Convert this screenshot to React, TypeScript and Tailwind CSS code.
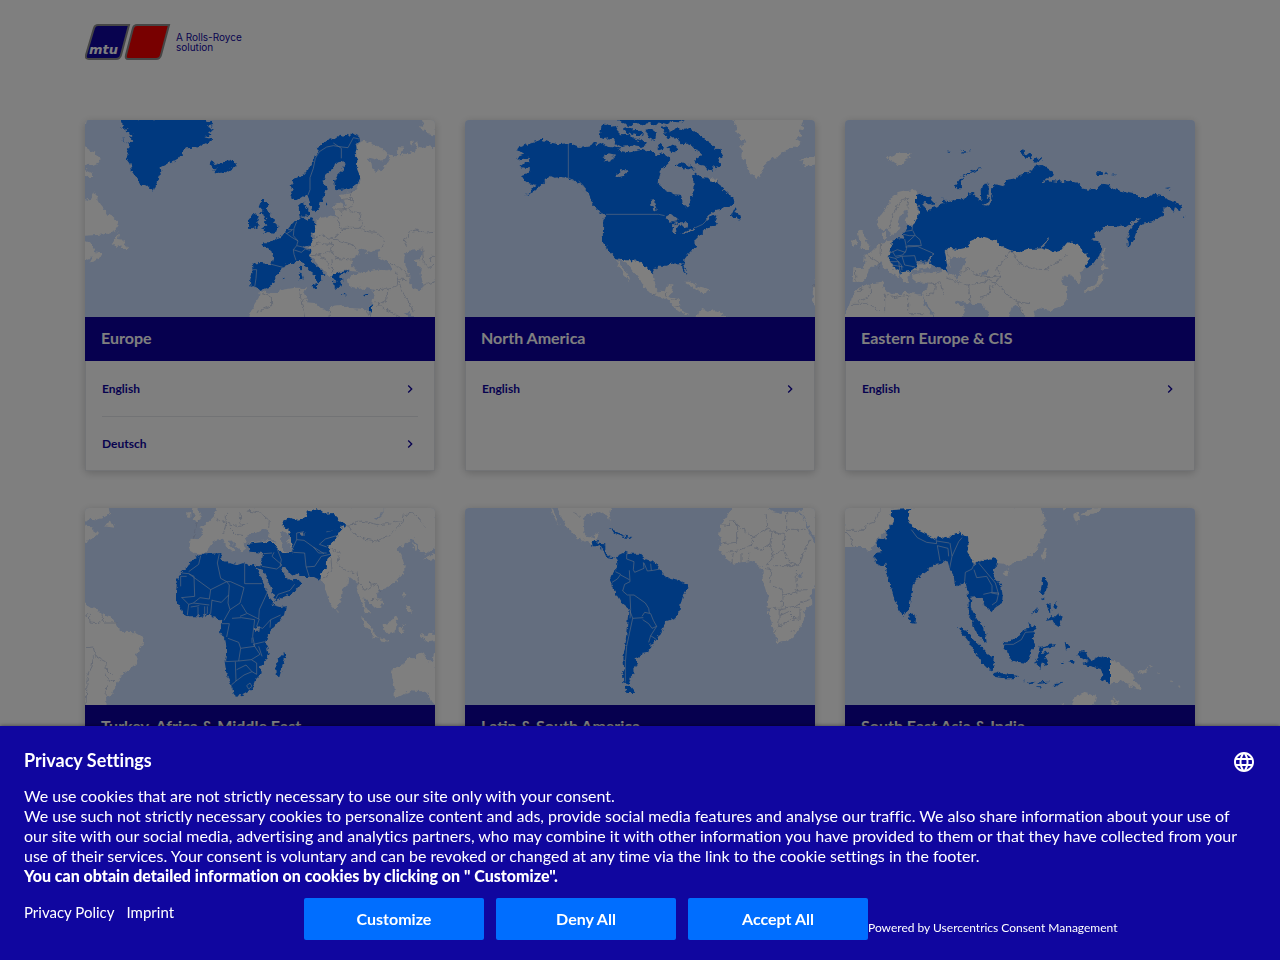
import React from "react";
import { MdChevronRight, MdLanguage } from "react-icons/md";

type MapShapes = {
  land: string;
  active: string;
  water?: string;
  borders: string;
  activeBorders: string;
};

type Region = {
  name: string;
  languages: string[];
  map: MapShapes;
};

const europe: MapShapes = {
  land: `M838 82 L850 78 872 84 905 100 923 118 915 132 892 135 866 128 858 132 874 142 877 160 886 170 897 165 905 170 912 152 925 145 930 128 924 118 945 124 962 122 975 116 984 118 1008 104 1004 88 1012 82 1016 96 1034 98 1042 92 1070 98 V612 H872 L876 580 878 555 883 525 862 520 848 525 835 516 820 522 808 512 803 492 822 478 850 472 812 468 803 466 780 470 762 480 756 490 742 478 725 460 708 442 694 428 690 410 688 390 700 370 706 330 716 310 745 304 772 308 764 292 762 270 780 262 790 276 800 272 796 256 779 252 780 240 815 234 828 226 842 194 832 160 828 100Z
    M10 10 H22 L18 28 10 30Z M10 92 L30 106 48 116 62 132 54 146 40 152 28 146 10 152Z M10 160 L34 172 40 186 26 186 10 180Z
    M10 262 L30 250 42 228 52 250 62 268 72 280 80 296 95 304 108 316 116 330 106 346 84 356 50 360 10 362Z M10 372 L34 388 46 412 72 418 58 428 40 440 30 442 40 424 20 434 10 432Z
    M92 390 L104 376 112 358 118 350 114 372 130 374 136 388 142 402 130 402 120 394 110 396 104 388Z
    M1020 10 H1070 V62 L1046 58 1036 46 1018 40 1030 30Z M950 106 L958 96 972 98 966 112 956 124Z M990 84 L996 78 1000 88 994 94Z
    M498 612 L514 590 524 566 536 548 540 528 572 534 610 524 650 518 678 520 672 536 682 550 678 562 704 564 720 580 748 590 756 572 786 570 810 582 846 584 866 588 870 612Z`,
  active: `M122 10 L130 34 124 42 146 40 136 48 158 60 150 66 160 78 144 86 128 76 132 68 124 68 150 92 138 104 146 120 140 130 152 146 156 170 170 188 182 208 204 214 220 230 228 210 236 186 244 172 242 156 262 146 270 134 274 142 296 130 304 118 318 100 346 98 388 80 398 72 372 66 398 62 384 52 402 44 380 34 400 30 390 18 380 22 374 10Z
    M388 146 L394 136 402 142 406 150 426 142 440 140 454 134 466 144 470 154 452 162 438 172 416 174 400 170 410 160 398 160Z
    M636 252 L630 232 642 226 632 214 640 196 656 184 672 178 684 164 694 146 704 126 716 110 710 98 724 88 736 84 750 70 764 72 778 62 792 68 800 56 808 64 820 56 836 62 840 74 826 84 830 100 824 120 832 136 830 160 842 188 830 206 812 218 786 224 766 222 762 196 770 180 788 164 794 146 784 140 770 144 756 166 740 178 730 196 740 222 734 240 724 254 718 280 704 292 696 282 690 262 684 248 680 236 662 248 648 256Z
    M658 302 L656 276 672 262 676 276 686 284 678 296 672 308Z M680 292 L690 288 690 302 680 302Z
    M540 296 L548 288 536 276 544 256 556 252 554 264 570 264 560 282 566 294 580 310 582 322 598 334 594 346 578 356 560 354 546 360 558 344 546 340 560 330 554 320 562 314 552 306 550 298Z
    M504 338 L504 318 516 302 528 298 536 304 532 318 534 334 520 340Z
    M550 382 L576 382 590 370 600 366 608 358 618 352 624 342 636 326 650 318 660 312 664 306 678 314 694 310 706 316 704 334 708 352 692 362 698 380 686 392 668 398 690 404 692 418 688 424 700 444 718 460 736 480 722 480 724 496 716 508 708 496 708 482 690 470 674 452 664 438 650 438 642 446 626 448 612 454 600 470 588 482 582 496 568 516 556 520 540 526 528 516 512 518 510 500 518 466 516 446 540 444 574 448 580 428 574 408 562 398 548 390Z
    M694 510 L712 506 710 518 700 516Z M656 478 L664 472 668 490 660 496Z M660 454 L666 452 666 466 660 464Z
    M754 484 L766 476 784 472 804 468 800 474 782 478 780 486 788 496 780 498 786 512 774 516 770 522 764 512 758 500 774 500 764 494Z M784 536 L796 538 796 541 784 540Z M850 540 L866 536 862 543 852 544Z M870 574 L876 564 876 594 870 586Z M738 262 L742 268 738 272Z M608 490 L614 488 612 493Z`,
  water: `M815 450 L820 430 834 420 840 402 852 406 866 414 884 404 900 402 890 416 900 430 928 444 936 462 920 466 896 464 870 468 850 472 830 468Z
    M974 420 L990 404 1018 402 1028 412 1020 432 1004 436 1010 452 1026 456 1022 480 1032 510 1022 526 1000 520 988 506 988 480 982 460 972 440Z M972 592 L990 590 1004 612 990 612Z`,
  borders: `M778 255 L812 250 820 262 806 286 785 282 760 282 M812 250 812 228 M806 286 840 294 838 310 850 328 838 340 790 340 780 350 M773 308 785 345 772 362 750 370 M786 284 784 310 M838 338 864 350 890 352 914 376 906 396 M702 370 725 358 745 372 770 374 790 380 820 390 828 402 M700 394 716 384 745 388 760 384 752 404 770 430 800 434 824 436 M694 418 714 420 740 412 752 410 M714 420 740 436 748 462 M756 430 758 470 M980 395 970 375 984 366 988 350 1010 345 1040 354 1065 352 M1012 404 1028 402 1030 440 1050 460 1062 450 1052 440 1052 424 1065 424 M930 445 952 456 975 468 988 484 M946 470 956 492 980 494 M955 494 950 516 926 522 888 524 M956 496 966 530 980 552 1000 590 M924 522 920 556 888 574 M886 560 910 580 960 606 M1032 510 1065 500 M546 536 574 546 575 572 530 590 M658 520 664 560 674 606 M664 560 680 550 M752 590 750 606 M858 588 870 606`,
  activeBorders: `M838 72 L820 68 804 98 786 96 760 92 740 96 718 110 706 130 700 160 690 188 690 224 684 240 M760 84 784 100 784 130 M650 320 642 340 640 362 654 378 650 392 640 404 642 418 648 436 M612 350 634 366 654 378 M636 346 620 356 M650 392 668 396 690 394 M640 404 664 412 676 402 690 406 M518 464 530 464 528 490 524 516 M574 448 612 458 M624 344 640 344`,
};

const northAmerica: MapShapes = {
  land: `M816 10 L832 42 822 46 846 60 836 68 856 78 850 90 842 96 846 110 844 126 856 138 858 156 874 178 890 192 902 184 908 160 916 148 938 128 956 126 982 102 1012 92 1024 82 1006 70 1028 62 1014 50 1030 38 1024 22 1034 10Z
    M1020 134 L1042 130 1070 126 V148 L1040 154 1024 146 1032 140Z
    M466 430 L478 442 492 464 508 486 510 498 500 490 488 470 474 448Z M474 430 L510 436 528 434 548 448 558 452 566 466 578 476 582 502 588 520 598 532 618 528 622 512 640 510 636 530 628 542 642 550 656 552 658 576 668 590 690 598 676 600 654 588 640 574 626 558 604 546 582 540 560 526 546 508 536 488 516 466 502 448Z
    M672 500 L688 500 708 512 724 520 748 526 740 532 722 530 700 516Z M708 612 L714 592 728 582 742 590 764 586 780 592 800 612Z M1070 494 V580 L1056 560 1060 520Z M748 188 L768 192 776 210 756 206Z`,
  active: `M168 102 L192 92 216 82 246 74 268 82 296 88 326 84 360 96 394 90 404 78 410 92 428 84 440 92 474 96 480 108 510 112 546 104 560 110 580 108 584 124 606 112 620 120 634 132 626 144 618 152 604 166 598 186 596 208 612 222 642 238 664 240 668 266 682 278 692 270 690 244 702 230 704 206 696 190 704 172 724 186 744 188 758 204 770 196 784 218 800 234 816 248 824 266 800 278 770 284 746 300 736 318 756 304 772 300 764 318 774 330 756 334 738 344 718 362 706 374 708 396 690 410 674 432 670 450 680 480 668 462 664 444 636 446 620 452 594 452 580 470 578 478 560 458 546 450 528 436 498 436 466 428 442 406 428 380 430 312 440 302 420 292 404 276 394 258 388 236 376 222 360 206 340 196 320 188 300 186 284 188 270 182 256 198 240 214 222 230 196 242 214 228 228 210 204 204 190 194 186 180 206 174 210 160 178 156 190 146 208 140 206 128 172 134 178 124 194 118 178 106Z
    M420 60 L424 36 440 24 456 32 468 30 474 48 484 58 506 56 520 70 544 76 560 88 540 96 508 92 484 96 464 86 468 74 446 70 430 72 418 66Z
    M468 10 H682 L660 22 634 20 622 28 600 22 588 34 566 24 540 30 520 22 508 34 486 24Z
    M486 44 L506 38 520 46 538 44 552 60 540 64 516 56 500 52Z M556 44 L582 40 588 60 584 78 568 70Z M592 88 L606 84 612 100 598 106Z
    M604 38 L622 34 630 50 650 40 672 44 690 40 706 54 720 56 728 72 752 80 760 96 778 104 788 124 776 132 784 152 768 160 756 150 762 170 744 166 734 152 720 150 704 140 712 128 724 116 708 106 694 92 680 86 662 88 656 70 640 66 626 72 614 54Z
    M622 98 L640 88 656 104 646 112 632 110Z M644 152 L664 142 686 150 704 164 676 162 660 156Z
    M812 302 L824 276 828 294 838 300 842 314 828 308 818 310Z`,
  water: `M424 128 L446 118 466 122 462 132 442 142 430 138 438 130Z M468 184 L484 166 508 166 492 182 478 186Z M572 254 L580 252 586 270 590 288 580 284 574 268Z M612 308 L630 298 652 304 652 316 630 320Z M636 356 L640 328 656 322 680 322 684 336 672 340 660 328 650 340 648 356Z M664 356 L686 344 706 338 700 346 680 356Z`,
  borders: `M580 542 L594 532 M618 548 620 532 M632 556 654 552 M1058 512 H1065 M642 572 658 576`,
  activeBorders: `M325 86 V188 L350 204 366 226 388 244 M438 298 H596 L614 302 M640 318 L654 322 M706 338 L728 328 740 316 746 300 M356 198 L372 214 368 220 M404 276 L430 300`,
};

const easternEurope: MapShapes = {
  land: `M140 122 L156 126 168 114 186 116 212 118 208 126 192 130 200 138 176 154 168 144 152 138Z
    M114 336 L110 316 126 296 142 274 156 248 174 234 200 228 226 224 234 240 230 266 238 298 226 322 204 330 194 316 206 296 200 282 184 300 176 318 178 336 164 358 150 364 146 340 130 344 120 340Z
    M130 374 L128 350 138 344 138 364Z M54 350 L66 342 70 358 78 374 88 392 84 402 62 402 66 390 58 376Z M34 378 L48 372 52 386 36 392Z
    M74 424 L92 412 108 396 122 384 156 376 160 404 146 428 162 448 186 468 176 490 156 476 136 462 124 442 104 454 86 462 80 486 62 504 38 500 40 460 72 458Z
    M180 470 L210 466 232 450 280 440 270 458 220 466 202 486 206 500 192 502 184 488Z
    M216 480 L250 472 286 474 310 466 326 480 344 478 352 500 360 480 340 460 318 442 314 410 326 398 360 402 388 396 386 380 410 370 430 366 468 376 484 394 512 406 540 412 566 402 604 400 640 410 664 404 680 384 708 384 722 402 744 424 748 446 732 462 716 474 724 500 718 514 704 490 690 478 668 484 664 502 682 520 680 554 658 580 630 588 600 580 580 590 588 612 H560 L540 580 520 570 500 612 H452 L438 580 426 568 390 566 366 560 340 556 330 544 350 566 376 576 364 612 H288 L270 580 254 554 246 536 262 522 264 504 230 502 218 492Z
    M10 612 L30 560 54 520 84 506 126 500 134 524 160 536 184 538 194 530 246 540 254 570 284 612Z
    M732 530 L748 516 768 510 778 480 788 476 786 500 770 518 744 530Z M780 458 L790 448 806 458 788 468Z M788 404 L794 400 792 440 786 440Z`,
  active: `M228 240 L240 236 270 246 286 262 280 270 262 266 246 262 252 276 262 290 276 280 296 272 310 266 308 250 320 262 344 256 380 250 384 236 398 234 410 246 424 256 422 226 434 206 446 206 446 236 440 250 454 244 458 214 468 208 490 214 498 198 520 194 540 180 580 166 584 152 604 150 642 170 638 182 614 194 606 206 626 196 650 200 684 198 712 206 724 220 744 224 776 218 788 206 806 210 828 224 860 230 880 234 892 246 930 246 940 236 968 240 984 254 1006 262 1026 270 1020 286 1008 280 1002 290 986 276 970 282 972 300 954 310 936 322 904 326 892 342 884 366 872 386 864 402 862 372 870 348 884 326 904 308 880 316 866 334 850 330 828 336 790 336 768 354 756 376 780 380 784 400 774 430 758 450 740 460 734 454 750 428 722 402 708 384 682 382 664 404 640 410 604 400 566 402 540 412 512 406 484 394 468 376 430 366 410 370 386 380 388 396 360 402 326 398 314 410 320 440 320 470 300 458 270 446 280 412 262 440 232 438 228 456 212 468 184 472 180 480 176 464 160 458 146 430 152 410 156 378 178 370 194 372 188 356 204 334 220 332 234 304 240 280 228 264Z
    M344 214 L360 192 380 176 410 162 428 158 400 170 374 184 362 200 366 216 360 224 350 220Z
    M542 108 L550 106 554 116 572 120 576 130 560 128 546 118Z M578 138 L590 130 606 134 590 140Z M768 172 L790 172 788 180 770 180Z M796 170 L802 174 798 180Z M812 178 L832 179 826 181Z M784 194 L796 196 790 198Z M974 222 L992 220 984 224Z M1028 300 L1036 300 1034 302Z M320 110 L332 110 326 113Z M358 104 L370 106 362 108Z M366 112 L380 112 372 116Z M386 106 L392 106 390 110Z`,
  water: `M356 430 L374 426 380 440 366 462 358 484 344 476 336 456 324 432 340 428Z M598 396 L616 380 626 362 626 378 610 396Z M428 270 L444 262 452 240 456 262 444 272Z M424 474 L444 466 440 478 426 480Z`,
  borders: `M320 410 L330 430 M344 474 370 470 386 458 400 474 424 482 450 486 482 482 470 462 494 432 512 408 M450 486 436 492 M484 480 462 510 440 540 M352 502 384 510 420 504 452 496 476 510 500 540 530 560 570 566 M386 510 390 566 M420 550 446 540 450 510 M516 406 540 450 580 462 620 464 660 436 684 416 M264 504 290 506 300 500 310 540 M286 506 284 530 258 542 M320 488 350 500 M134 536 V592 M134 540 160 548 206 540 206 590 M206 596 H254 M54 530 70 520 M36 568 H90 L120 590 M90 506 92 540 54 560 M186 470 196 458 M150 344 156 300 184 254 206 250 204 280 M78 418 116 442 120 460 M122 384 120 420 M46 464 48 500 M536 562 540 580 552 600`,
  activeBorders: `M190 350 L216 346 218 332 M190 358 208 362 224 362 M218 346 226 362 240 374 244 392 202 392 M224 362 202 382 M194 372 200 400 196 412 M150 414 172 404 196 412 M196 396 232 394 250 402 278 414 M158 410 166 424 188 420 196 410 M148 426 166 430 184 424 224 422 230 444 M166 430 184 450 186 466 M186 424 194 450 226 456 M150 440 176 440 180 470 M156 450 190 456`,
};

const africa: MapShapes = {
  land: `M10 10 H84 L90 32 70 44 46 52 28 50 10 58Z M10 68 L36 70 42 90 58 84 48 98 26 112 10 118Z M74 70 L84 56 92 52 104 74 88 72Z
    M10 300 L34 316 52 318 66 334 92 340 108 360 116 374 130 386 164 388 190 402 192 420 178 438 170 460 168 484 150 500 132 508 116 530 100 562 94 578 78 582 80 612 H10Z
    M336 20 L346 10 356 24 366 46 352 54 338 50 344 36Z M322 28 L334 28 334 44 322 44Z
    M360 72 L376 66 394 48 402 40 412 10 H1070 V130 L1040 152 1018 142 1012 120 1000 106 974 124 960 130 950 140 962 150 974 188 972 210 944 240 918 256 896 262 890 276 910 300 900 318 882 312 866 296 850 282 856 310 872 332 860 330 846 306 838 278 832 260 836 240 820 230 806 220 802 246 786 262 780 300 764 320 750 300 736 260 724 228 700 210 640 180 600 150 540 146 508 142 500 120 520 118 560 112 590 120 566 100 570 86 554 78 530 90 508 90 500 106 494 122 498 138 484 148 470 130 450 112 444 118 466 140 458 148 440 132 428 104 404 112 396 122 376 148 360 154 344 152 328 142 332 104 362 106 370 92Z
    M842 342 L856 350 880 384 894 404 882 402 862 376Z M908 364 L932 358 944 338 952 352 946 388 924 394 910 382Z M896 406 L930 412 924 416 900 412Z M970 262 L976 274 970 290Z M978 306 L990 310 996 332 984 328Z M1020 392 L1034 400 1058 386 1070 400 V414 L1044 418 1024 402Z M958 374 L976 362 966 378 972 390 960 390Z
    M934 512 L938 498 970 486 984 464 1004 466 1010 454 1030 448 1036 462 1056 478 1065 440 H1070 V612 L1052 590 1046 574 1020 564 992 562 970 576 944 582 944 556Z
    M768 318 L776 326 774 334Z M1000 116 L1012 132 1004 146 1000 130Z M1028 168 L1046 162 1058 150 1070 156 V166 L1040 172Z`,
  active: `M290 246 L290 230 304 210 324 190 336 168 360 156 392 152 424 150 424 170 452 182 472 186 490 180 520 188 540 190 546 170 550 150 510 146 502 122 522 120 560 116 584 124 592 136 608 150 634 150 640 130 630 108 628 84 610 70 604 56 626 44 652 50 680 44 680 26 714 16 736 32 760 30 776 52 804 66 784 74 774 96 762 116 744 132 754 160 742 164 740 194 722 210 718 230 702 222 668 222 650 212 638 220 628 208 608 192 602 196 618 220 634 228 644 226 664 238 650 258 632 274 604 284 584 294 560 262 548 224 530 194 548 232 556 258 572 286 580 306 602 312 618 310 612 336 580 374 564 398 558 420 566 452 550 480 540 494 542 514 526 530 514 560 486 576 464 578 454 548 440 514 434 476 442 444 436 412 420 388 424 350 400 342 388 332 360 340 324 340 310 330 288 292 288 274Z
    M586 498 L592 480 590 466 606 460 612 446 618 458 610 480 598 522 588 516Z`,
  water: `M602 88 L620 84 628 100 620 114 632 124 638 148 622 150 606 140 604 116Z M660 90 L672 88 674 98 664 98Z M738 86 L768 82 740 88Z M524 376 L540 370 538 386 526 386Z M884 48 L902 36 914 18 906 36 890 50Z M530 194 L548 200 570 246 586 290 576 296 560 262Z M608 190 L620 212 634 220 644 216 650 226 636 234 618 222Z`,
  borders: `M804 66 L822 64 840 54 866 58 896 66 920 62 950 56 966 58 970 36 1000 30 1020 52 1038 74 M804 66 820 90 850 108 890 114 926 98 960 64 M752 136 780 150 770 180 800 204 826 210 M732 226 756 200 752 160 M830 206 836 240 854 262 874 250 870 236 M870 240 894 250 902 270 M872 290 898 288 M15 336 28 334 30 360 50 362 68 350 72 360 92 360 110 360 M66 334 68 350 M15 434 40 432 46 460 76 476 80 500 98 518 M40 460 36 490 22 520 18 606 M76 512 84 530 102 536 M80 544 78 580 M404 46 440 60 430 92 M440 24 438 60 480 70 506 62 M480 30 484 68 M500 24 540 30 568 52 566 76 M352 56 340 104 M450 78 466 94 490 98`,
  activeBorders: `M306 210 L326 212 392 260 396 258 440 236 422 226 412 180 418 152 M362 158 356 184 326 206 M342 220 344 280 304 284 M326 212 342 220 M302 250 V220 H320 M392 260 388 288 360 284 340 300 326 304 M396 290 392 332 M440 236 448 246 446 276 424 298 396 292 M494 182 V242 H546 M440 236 452 236 492 254 480 300 450 320 444 300 446 276 M484 304 500 330 536 348 538 320 564 264 M538 348 530 370 548 376 572 350 602 336 M572 350 570 374 M450 320 432 352 M456 346 484 344 524 350 518 400 524 430 482 436 476 418 444 406 M424 362 448 362 440 402 M480 340 500 332 M482 436 476 474 434 476 M476 474 514 470 540 454 520 424 554 416 M466 476 468 534 454 546 M468 534 492 516 516 506 498 486 470 500 M516 506 530 514 530 480 514 470 M500 548 510 540 516 550 506 558Z M516 404 516 420 M536 430 546 460 M306 284 326 304 322 336 M332 312 358 308 M354 312 V338 M374 310 V334 M382 310 V332 M340 300 388 306 M546 190 590 198 606 186 576 160 582 148 M552 152 576 150 M592 138 604 170 600 192 M584 294 594 274 630 262 644 244 M636 140 650 110 672 112 700 132 732 152 M640 148 674 150 678 190 688 222 M678 192 704 190 724 160 750 154 M650 110 V90 L672 86 M718 124 736 108 770 98 M718 124 740 132 M700 132 716 150 740 150`,
};

const southAmerica: MapShapes = {
  land: `M274 10 L290 46 300 72 288 52 276 30Z M288 10 L302 40 318 66 338 94 362 110 396 122 408 112 418 92 404 88 400 104 382 102 370 84 368 56 380 36 404 30 430 32 446 40 454 62 448 30 452 10Z
    M818 10 L800 44 782 66 776 100 784 124 778 140 800 168 822 182 846 178 876 174 892 186 908 198 908 232 918 264 926 280 922 316 932 352 944 390 952 420 978 416 1000 404 1012 384 1028 364 1036 340 1030 328 1054 304 1052 280 1070 230 V10 H1034 L1018 28 980 26 960 30 938 24 914 10Z`,
  active: `M396 118 L404 110 414 112 412 122 436 124 436 146 446 160 466 166 456 168 438 160 428 138 414 130 398 130Z
    M446 78 L462 82 486 96 514 102 508 106 486 100 464 90Z
    M466 166 L476 156 496 146 510 152 540 152 556 168 584 178 600 200 614 216 632 228 660 234 680 244 682 258 668 280 662 300 658 326 646 346 620 354 608 378 592 406 580 422 572 426 564 446 546 450 542 462 530 464 532 478 524 496 516 504 524 512 512 524 506 546 490 540 486 520 492 492 490 462 496 430 500 380 506 318 484 300 470 276 456 250 450 230 458 210 470 198 472 180Z
    M498 548 L512 552 526 570 506 570 494 558Z`,
  water: `M1020 30 L1034 50 1056 110 1070 128 V112 L1046 72 1024 26Z M1014 214 L1028 210 1026 224 1016 224Z`,
  borders: `M784 66 H806 V54 H818 L880 102 874 126 840 140 800 148 M818 54 830 60 830 118 788 122 M880 102 924 78 918 34 M924 78 936 86 930 122 902 140 880 134 M936 86 976 96 968 140 940 158 930 122 M980 26 V82 H1034 M968 140 990 180 1018 188 1030 150 1050 110 M940 158 924 186 M940 188 1010 188 1008 238 1014 266 970 276 966 258 936 250 M912 196 936 200 930 240 M970 276 966 316 922 316 M966 316 1004 310 1028 296 1052 290 M958 318 956 372 944 388 M956 372 984 354 1006 346 986 326 960 338 M1006 346 1020 350 1020 320 1004 310 M992 386 1002 380 M1004 262 1040 260 M820 150 816 180 M846 150 V178 M866 146 V174 M340 26 362 40`,
  activeBorders: `M500 152 L500 168 522 176 520 200 524 208 M508 202 510 236 494 244 488 264 502 276 522 276 556 300 566 316 568 330 M524 208 552 196 550 178 M552 180 562 204 580 202 600 198 M572 182 574 202 M456 238 472 228 482 214 466 206 M482 216 508 230 M510 278 512 320 510 346 M508 318 518 346 550 344 M546 340 554 328 572 332 580 352 590 370 576 376 566 362 548 350 M590 370 572 398 566 418 M572 398 590 410 M518 346 508 392 500 430 496 480 496 536`,
};

const southEastAsia: MapShapes = {
  land: `M10 10 H600 L612 34 614 56 606 66 618 76 614 98 600 112 592 140 570 158 540 172 516 184 496 188 490 182 470 180 460 166 430 170 400 178 380 150 380 110 360 90 320 104 270 104 220 80 200 44 160 50 140 80 110 110 88 148 72 132 10 132Z
    M488 212 L498 200 510 206 498 220Z M606 144 L616 138 620 146 612 174 604 160Z M700 36 L716 28 720 44 712 62 704 54Z M722 34 L750 20 778 10 790 10 778 28 748 34 728 40Z M664 10 H690 L672 20Z
    M810 470 L834 478 852 494 874 506 882 530 906 556 896 560 870 548 852 534 832 538 810 542Z M888 506 L914 502 920 490 922 504 906 514Z M926 486 L936 490 930 492Z M950 506 L960 516 956 516Z M990 530 L1000 536 996 538Z M1014 546 L1022 552 1018 554Z
    M696 598 L706 580 720 576 734 570 768 578 764 596 752 612 H698Z M814 612 L816 582 834 590 836 612Z M660 606 L668 600 672 606Z`,
  active: `M154 18 L214 15 202 40 214 70 238 84 288 108 300 102 326 108 340 92 362 88 372 98 384 100 386 130 378 146 394 166 402 186 414 176 440 170 460 162 474 184 456 202 462 222 484 248 488 280 486 300 470 310 454 328 448 318 428 304 430 286 410 282 394 284 392 312 402 332 412 350 432 372 440 420 424 408 404 380 396 350 386 336 386 296 382 260 374 236 358 246 348 250 344 222 330 200 322 170 310 176 278 186 272 196 246 212 218 246 212 290 206 320 190 338 178 322 162 286 152 250 142 214 136 182 124 190 106 180 114 168 96 160 100 150 124 148 108 122 114 108 138 106 140 84 160 60 162 44 152 40Z
    M210 330 L220 328 228 346 226 362 214 360 208 346Z
    M354 372 L380 382 400 410 426 436 444 454 464 464 458 502 444 498 420 474 402 442 382 410 366 390Z
    M458 510 L476 506 496 514 520 516 538 520 520 526 490 526 466 522Z
    M488 418 L510 418 518 406 538 398 550 380 564 378 566 360 580 370 590 374 584 388 578 404 586 428 576 440 568 460 560 480 530 476 506 468 502 446 492 438Z
    M598 432 L620 426 648 424 644 430 610 436 606 450 624 446 630 452 614 462 624 480 614 490 606 474 600 502 596 484 586 474 596 452Z
    M604 222 L620 222 624 244 616 268 610 276 600 266 606 244Z M618 300 L632 306 634 328 624 322Z M640 312 L646 298 654 306 648 320Z M620 354 L634 340 648 340 656 324 666 348 656 372 642 362 634 350Z M574 338 L594 312 590 324Z M606 282 L614 288 610 292Z
    M674 416 L680 418 688 430 678 440Z M662 478 L672 476 668 482Z M684 474 L708 474 700 480Z M712 456 L726 444 738 448 744 466 756 472 780 458 810 468 V540 L794 534 780 528 790 516 782 498 760 492 744 488 730 480 744 474 722 466Z
    M560 540 L586 536 582 542 566 544Z M596 538 L628 536 620 540 600 542Z M590 550 L606 550 600 554Z M636 554 L648 540 668 536 652 548Z M548 536 L556 536 552 538Z`,
  borders: `M15 82 L76 82 78 66 104 58 M15 84 38 108 34 130 M104 58 112 40 124 18 M820 586 828 606`,
  activeBorders: `M214 80 L232 104 260 118 290 122 288 106 M290 114 328 120 M292 128 300 174 M292 128 324 136 326 160 M330 120 336 160 M328 200 336 160 356 116 366 104 M374 236 376 208 396 198 402 184 M402 200 410 224 440 220 456 248 456 268 430 274 M416 180 436 204 466 240 476 274 454 270 M456 268 476 270 470 296 456 306 M490 424 520 424 544 410 556 388 584 386`,
};

const regions: Region[] = [
  { name: "Europe", languages: ["English", "Deutsch"], map: europe },
  { name: "North America", languages: ["English"], map: northAmerica },
  { name: "Eastern Europe & CIS", languages: ["English"], map: easternEurope },
  { name: "Turkey, Africa & Middle East", languages: [], map: africa },
  { name: "Latin & South America", languages: [], map: southAmerica },
  { name: "South East Asia & India", languages: [], map: southEastAsia },
];

function Logo() {
  return (
    <a
      href="#home"
      className="inline-flex items-center gap-1 font-[Inter,sans-serif] text-[#10069f]"
    >
      <svg viewBox="0 0 86 36" className="h-9 w-[86px]" aria-hidden="true">
        <g strokeWidth="2" stroke="#8c8c8c">
          <path
            d="M13 1 H44 L36 31 Q35 35 31 35 H4 Q0 35 1 31 L9 4 Q10 1 13 1Z"
            fill="#10069f"
          />
          <path
            d="M52 1 H84 L76 31 Q75 35 71 35 H43 Q40 35 41 31 L48 4 Q49 1 52 1Z"
            fill="#f00000"
          />
        </g>
        <text
          x="4"
          y="30"
          fontFamily="DejaVu Sans, sans-serif"
          fontSize="13"
          fontWeight="700"
          fontStyle="italic"
          fill="#ffffff"
        >
          mtu
        </text>
      </svg>
      <span className="pl-px text-[10px] leading-[10px]">
        A Rolls-Royce
        <br />
        solution
      </span>
    </a>
  );
}

function RegionMap({ map }: { map: MapShapes }) {
  const coastId = React.useId();
  return (
    <svg
      viewBox="15 15 1050 591"
      className="block w-full rounded-t-sm bg-[#c8dcff]"
      strokeLinejoin="round"
      aria-hidden="true"
    >
      {/* Ragged coast lines */}
      <filter
        id={coastId}
        filterUnits="userSpaceOnUse"
        x="0"
        y="0"
        width="1080"
        height="620"
        colorInterpolationFilters="sRGB"
      >
        <feTurbulence type="fractalNoise" baseFrequency="0.08" numOctaves="2" />
        <feDisplacementMap
          in="SourceGraphic"
          scale="16"
          xChannelSelector="R"
          yChannelSelector="G"
        />
      </filter>
      <g filter={`url(#${coastId})`}>
        <path d={map.land} fill="#ffffff" />
        <path d={map.borders} fill="none" stroke="#b4c3e1" strokeWidth="2" />
        <path d={map.active} fill="#0072ff" />
        {map.water && <path d={map.water} fill="#c8dcff" />}
      </g>
      <path
        d={map.activeBorders}
        fill="none"
        stroke="#bcd8ff"
        strokeWidth="2"
      />
    </svg>
  );
}

function RegionCard({ region }: { region: Region }) {
  return (
    <section className="flex flex-col rounded-sm bg-white shadow-[0_2px_8px_rgba(0,0,0,0.2)]">
      <RegionMap map={region.map} />
      <h2 className="bg-[#0c009f] px-4 pt-[9px] pb-[11px] text-base leading-6 font-bold text-white">
        {region.name}
      </h2>
      <ul className="min-h-[110px] grow border-x border-gray-200 px-4 pt-px shadow-[inset_0_-1px_0_#e5e7eb]">
        {region.languages.map((language) => (
          <li
            key={language}
            className="border-b border-gray-200 last:border-b-0"
          >
            <a
              href={`#${language}`}
              className="flex h-[54px] items-center justify-between text-xs font-bold text-[#10069f]"
            >
              {language}
              <MdChevronRight size={16} />
            </a>
          </li>
        ))}
      </ul>
    </section>
  );
}

function PrivacyBanner() {
  const buttonClass =
    "h-[42px] w-[180px] rounded-xs bg-[#006eff] text-base font-bold text-white";
  return (
    <div
      role="dialog"
      aria-labelledby="privacy-title"
      className="fixed inset-x-0 bottom-0 bg-[#10069f] px-6 pt-6 pb-5 text-white shadow-[0_0_4px_rgba(0,0,0,0.5)] [font-variant-ligatures:none]"
    >
      {/* Heading */}
      <div className="flex items-start justify-between">
        <h2 id="privacy-title" className="text-lg leading-5 font-bold">
          Privacy Settings
        </h2>
        <button type="button" aria-label="Select language">
          <MdLanguage size={24} />
        </button>
      </div>

      {/* Text */}
      <p className="mt-3 text-base leading-5">
        We use cookies that are not strictly necessary to use our site only with
        your consent.
        <br />
        We use such not strictly necessary cookies to personalize content and
        ads, provide social media features and analyse our traffic. We also
        share information about your use of our site with our social media,
        advertising and analytics partners, who may combine it with other
        information you have provided to them or that they have collected from
        your use of their services. Your consent is voluntary and can be revoked
        or changed at any time via the link to the cookie settings in the
        footer.
        <br />
        <strong className="font-black">
          You can obtain detailed information on cookies by clicking on "
          Customize".
        </strong>
      </p>

      {/* Links and buttons */}
      <div className="mt-3 flex flex-wrap">
        <div className="flex w-[280px] gap-3 pt-1 text-[15px] leading-5">
          <a href="#privacy">Privacy Policy</a>
          <a href="#imprint">Imprint</a>
        </div>
        <div className="flex flex-wrap gap-3">
          <button type="button" className={buttonClass}>
            Customize
          </button>
          <button type="button" className={buttonClass}>
            Deny All
          </button>
          <button type="button" className={buttonClass}>
            Accept All
          </button>
        </div>
        <div className="self-end pb-1 text-xs leading-4">
          Powered by <a href="#usercentrics">Usercentrics Consent Management</a>
        </div>
      </div>
    </div>
  );
}

export default function App() {
  return (
    <div className="h-screen overflow-hidden bg-white font-[Lato,sans-serif]">
      <div className="mx-auto max-w-[1140px] px-[15px]">
        <header className="flex pt-6 pb-[60px]">
          <Logo />
        </header>
        <main className="grid gap-x-[30px] gap-y-[37px] sm:grid-cols-2 lg:grid-cols-3">
          {regions.map((region) => (
            <RegionCard key={region.name} region={region} />
          ))}
        </main>
      </div>

      {/* Page dimmer */}
      <div className="fixed inset-0 bg-black/50" />
      <PrivacyBanner />
    </div>
  );
}
